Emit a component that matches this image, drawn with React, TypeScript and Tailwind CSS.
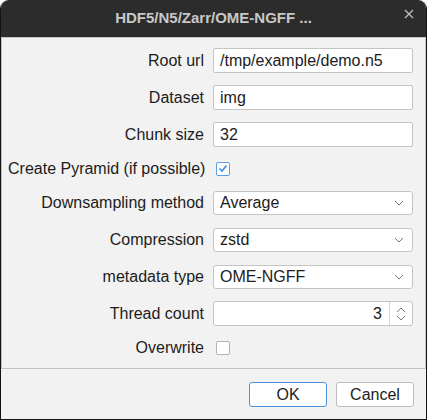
import React from 'react';

const font = { fontFamily: '"Liberation Sans", Arial, sans-serif' };

function Chevron() {
  return (
    <svg width="10" height="6" viewBox="0 0 10 6" className="text-[#7a7a7a]">
      <path d="M1 1l4 4 4-4" fill="none" stroke="currentColor" strokeWidth="1" />
    </svg>
  );
}

function TextField({ value }: { value: string }) {
  return (
    <div className="w-[200px] h-[25px] bg-white border border-[#c4c4c4] rounded-[2px] flex items-center px-[6px] text-[16px] text-[#1c1c1c]">
      {value}
    </div>
  );
}

function Combo({ value }: { value: string }) {
  return (
    <div className="w-[200px] h-[24px] bg-white border border-[#c4c4c4] rounded-[3px] flex items-center justify-between pl-[6px] pr-[8px] text-[16px] text-[#1c1c1c]">
      <span>{value}</span>
      <Chevron />
    </div>
  );
}

function SpinBox({ value }: { value: string }) {
  return (
    <div className="w-[200px] h-[25px] bg-white border border-[#c4c4c4] rounded-[3px] flex items-center text-[16px] text-[#1c1c1c]">
      <span className="flex-1 text-right pr-[7px]">{value}</span>
      <div className="w-[23px] h-full border-l border-[#d4d4d4] flex flex-col items-center justify-center gap-[2px]">
        <svg width="10" height="6" viewBox="0 0 10 6" className="text-[#7a7a7a]">
          <path d="M1 5l4-4 4 4" fill="none" stroke="currentColor" strokeWidth="1" />
        </svg>
        <svg width="10" height="6" viewBox="0 0 10 6" className="text-[#7a7a7a]">
          <path d="M1 1l4 4 4-4" fill="none" stroke="currentColor" strokeWidth="1" />
        </svg>
      </div>
    </div>
  );
}

function CheckBox({ checked }: { checked?: boolean }) {
  return (
    <div className="ml-[3px] w-[14px] h-[14px] bg-white rounded-[2px] border flex items-center justify-center"
      style={{ borderColor: checked ? '#5a9ee6' : '#b4b4b4' }}>
      {checked && (
        <svg width="10" height="9" viewBox="0 0 10 9">
          <path d="M1.5 4.5l2.5 2.5 4.5-5.5" fill="none" stroke="#3d8be0" strokeWidth="1.6" />
        </svg>
      )}
    </div>
  );
}

function Row({ label, h = 'h-[25px]', children }: { label: string; h?: string; children: React.ReactNode }) {
  return (
    <div className={`flex items-center ${h}`}>
      <div className="w-[196px] text-right text-[16px] text-[#1c1c1c] whitespace-nowrap">{label}</div>
      <div className="ml-[9px] flex items-center">{children}</div>
    </div>
  );
}

export default function App() {
  return (
    <div className="w-[427px] h-[420px] bg-white" style={font}>
      <div className="w-full h-full flex flex-col bg-[#f2f2f2] rounded-t-[9px] overflow-hidden border-x border-b border-[#121212]">
        {/* title bar */}
        <div className="h-[37px] shrink-0 bg-[#2c2c2c] relative flex items-center justify-center">
          <span className="text-[15px] font-bold text-[#c8c8c8]">HDF5/N5/Zarr/OME-NGFF ...</span>
          <span className="absolute right-[12px] top-[9px] text-[#bdbdbd]">
            <svg width="10" height="10" viewBox="0 0 10 10">
              <path d="M1 1l8 8M9 1l-8 8" stroke="currentColor" strokeWidth="1.3" />
            </svg>
          </span>
        </div>

        {/* form panel */}
        <div className="h-[332px] shrink-0 border border-[#c4c4c4] pl-[6px] pt-[10px] flex flex-col gap-[12px]">
          <Row label="Root url"><TextField value="/tmp/example/demo.n5" /></Row>
          <Row label="Dataset"><TextField value="img" /></Row>
          <Row label="Chunk size"><TextField value="32" /></Row>
          <Row label="Create Pyramid (if possible)" h="h-[19px]"><CheckBox checked /></Row>
          <Row label="Downsampling method"><Combo value="Average" /></Row>
          <Row label="Compression"><Combo value="zstd" /></Row>
          <Row label="metadata type"><Combo value="OME-NGFF" /></Row>
          <Row label="Thread count"><SpinBox value="3" /></Row>
          <Row label="Overwrite" h="h-[19px]"><CheckBox /></Row>
        </div>

        {/* buttons */}
        <div className="flex-1 flex items-start justify-end gap-[9px] pt-[13px] pr-[12px]">
          <button className="w-[78px] h-[25px] bg-white border-[1.5px] border-[#4a90d9] rounded-[3px] text-[16px] text-[#1c1c1c]">OK</button>
          <button className="w-[78px] h-[25px] bg-white border border-[#bdbdbd] rounded-[3px] text-[16px] text-[#1c1c1c]">Cancel</button>
        </div>
      </div>
    </div>
  );
}
